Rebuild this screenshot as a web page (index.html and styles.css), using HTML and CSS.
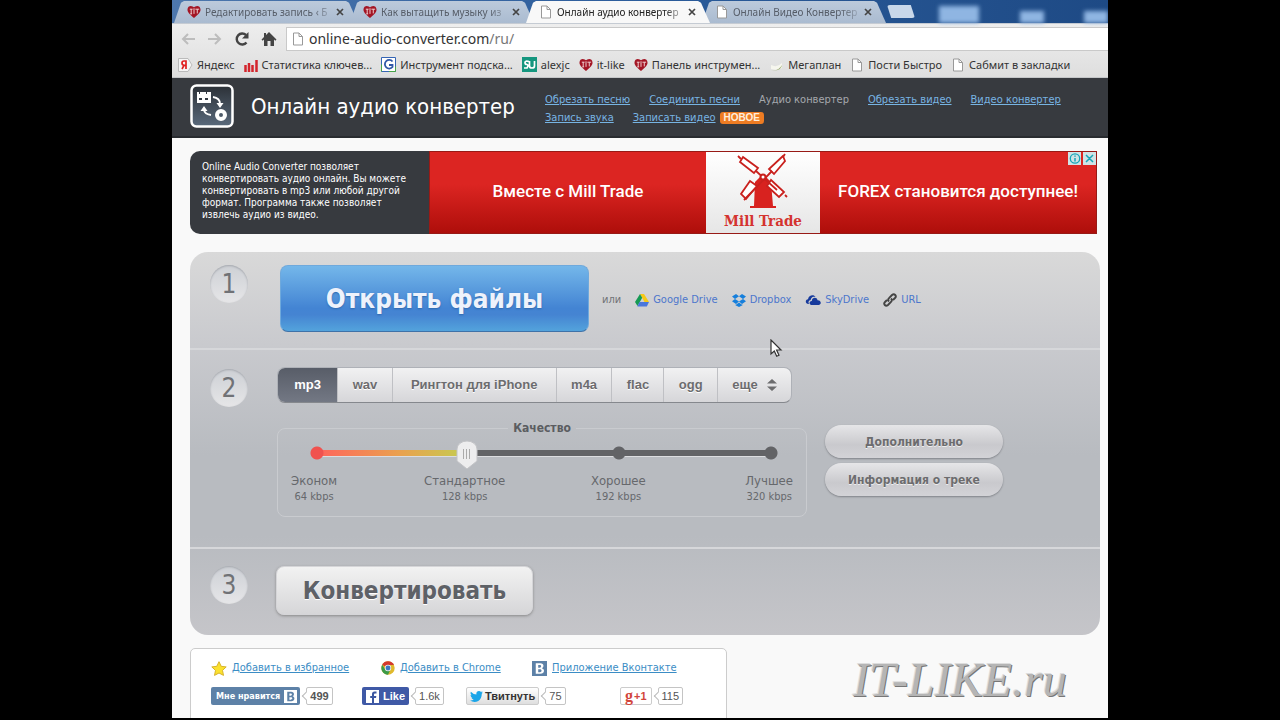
FILE: index.html
```html
<!DOCTYPE html>
<html lang="ru">
<head>
<meta charset="utf-8">
<title>Онлайн аудио конвертер</title>
<link rel="stylesheet" href="styles.css">
</head>
<body>
<svg class="defs" aria-hidden="true">
  <symbol id="page" viewBox="0 0 12 14"><path d="M1.500 1h5.500l3.500 3.500V13h-9z" fill="#fff" stroke="#999"/><path d="M7 1v3.500h3.500" fill="none" stroke="#999"/></symbol>
  <symbol id="heart" viewBox="0 0 15 14"><path d="M7.500 13.500C5 11 .5 8 .5 4.500.5 1.500 2.500.5 4 .5c1.500 0 3 .8 3.500 1.500C8 1.300 9.500.5 11 .5c1.500 0 3.500 1 3.500 4 0 3.500-4.500 6.500-7 9z" fill="#a31524"/><path d="M3 4h3M4.500 4v5M7.500 3v6M9 4h4M11 4v4.500M3.500 9h2" stroke="#f3dada" fill="none"/></symbol>
  <symbol id="vk" viewBox="0 0 14 14"><path d="M3.500 2h4.200c2 0 3 1 3 2.500 0 1-.5 1.700-1.500 2.200 1.400.4 2 1.300 2 2.500 0 1.800-1.300 2.800-3.400 2.800H3.500zm2.300 1.700v2.500h1.300c1 0 1.400-.5 1.400-1.300s-.5-1.200-1.400-1.200zm0 4.100v2.600h1.600c1 0 1.500-.5 1.500-1.300s-.5-1.300-1.500-1.300z" fill="currentColor"/></symbol>
  <symbol id="close" viewBox="0 0 8 8"><path d="M1 1l6 6M7 1L1 7" stroke="#444" stroke-width="1.700"/></symbol>
</svg>
<div class="screen">
  <header class="browser">
    <div class="tabs">
      <div class="tab"><svg class="fav"><use href="#heart"/></svg><span>Редактировать запись ‹ Б</span><button aria-label="Закрыть"><svg><use href="#close"/></svg></button></div>
      <div class="tab"><svg class="fav"><use href="#heart"/></svg><span>Как вытащить музыку из</span><button aria-label="Закрыть"><svg><use href="#close"/></svg></button></div>
      <div class="tab active"><svg class="fav"><use href="#page"/></svg><span>Онлайн аудио конвертер</span><button aria-label="Закрыть"><svg><use href="#close"/></svg></button></div>
      <div class="tab"><svg class="fav"><use href="#page"/></svg><span>Онлайн Видео Конвертер</span><button aria-label="Закрыть"><svg><use href="#close"/></svg></button></div>
      <button class="newtab" aria-label="Новая вкладка"></button>
      <div class="desktop"><i></i><i></i><i></i></div>
    </div>
    <div class="toolbar">
      <button aria-label="Назад"><svg width="16" height="16" viewBox="0 0 16 16"><path d="M15 8H3M8 3L3 8l5 5" fill="none" stroke="#bdbdbd" stroke-width="2"/></svg></button>
      <button aria-label="Вперёд"><svg width="16" height="16" viewBox="0 0 16 16"><path d="M1 8h12M8 3l5 5-5 5" fill="none" stroke="#bdbdbd" stroke-width="2"/></svg></button>
      <button aria-label="Обновить"><svg width="16" height="16" viewBox="0 0 16 16"><path d="M12.500 11.500A5.500 5.500 0 1 1 12 4" fill="none" stroke="#444" stroke-width="2.400"/><path d="M14.500 1v6.500H8z" fill="#444"/></svg></button>
      <button aria-label="Домой"><svg width="16" height="16" viewBox="0 0 16 16"><path d="M8 1l7.500 7.500-1.200 1.200L13 8.500V15H9.500v-5h-3v5H3V8.500L1.700 9.700.5 8.500 3 6V2h2v2z" fill="#444"/></svg></button>
      <div class="address"><svg class="fav"><use href="#page"/></svg><span class="url" role="textbox" aria-label="Адрес" contenteditable="true" spellcheck="false">online-audio-converter.com<em>/ru/</em></span></div>
    </div>
    <nav class="bookmarks">
      <a href="#"><svg width="15" height="14" viewBox="0 0 15 14"><path d="M.5.5H10L14 7l-4 6.500H.5z" fill="#f5f5f5" stroke="#bbb"/><path d="M8 11V3H6Q4 3 4 5t2 2.300H8M6 7.300L4 11" fill="none" stroke="#e02020" stroke-width="1.700"/></svg>Яндекс</a>
      <a href="#"><svg width="14" height="14" viewBox="0 0 14 14"><path d="M1.500 14V7M5 14V5M8.500 14V7M12.500 14V2" stroke="#d3252c" stroke-width="2.500"/></svg>Статистика ключев...</a>
      <a href="#"><svg width="15" height="15" viewBox="0 0 15 15"><path d="M.5.5h14v14H.5z" fill="#fff" stroke="#3565b5"/><path d="M.5 14.500v-7M8 14.500h6.500v-5" stroke="#48a548" fill="none"/><path d="M11.500 4.500A4.300 4.300 0 1 0 11.500 10V8H8" fill="none" stroke="#3158a8" stroke-width="1.800"/></svg>Инструмент подска...</a>
      <a href="#"><svg width="15" height="15" viewBox="0 0 15 15"><path d="M0 0h15v15H0z" fill="#15967f"/><path d="M7 4.500Q3 3.500 3 5.500T5 7.500 5 11H2M7.500 4v5q0 2 2.500 2t2.500-2V4" fill="none" stroke="#fff" stroke-width="1.700"/></svg>alexjc</a>
      <a href="#"><svg class="fav"><use href="#heart"/></svg>it-like</a>
      <a href="#"><svg class="fav"><use href="#heart"/></svg>Панель инструмен...</a>
      <a href="#"><svg width="15" height="14" viewBox="0 0 15 14"><path d="M2 7q6 3 11-2v5q-5 3-11 1z" fill="#f6f6ee"/><path d="M2 12q7 2 11-5-1 7-11 5z" fill="#9dae74"/></svg>Мегаплан</a>
      <a href="#"><svg class="fav"><use href="#page"/></svg>Пости Быстро</a>
      <a href="#"><svg class="fav"><use href="#page"/></svg>Сабмит в закладки</a>
    </nav>
  </header>

  <div class="site-head">
    <svg class="logo" viewBox="0 0 44 44"><defs><linearGradient id="lg" x2="0" y2="1"><stop stop-color="#2c3137"/><stop offset="1" stop-color="#5a6a7c"/></linearGradient></defs><rect x="1.500" y="1.500" width="41" height="41" rx="5" fill="url(#lg)" stroke="#fff" stroke-width="2.500"/><path d="M7 8h2v2h1V8h6v2h1V8h4v11H7z" fill="#fff"/><path d="M9 14h3v2H9zM15 14h3v2h-3z" fill="#343b43"/><path d="M23 13q7 1 7 7M21 31q-7-1-7-6" fill="none" stroke="#fff" stroke-width="1.800"/><path d="M26.500 19h7L30 24zM10.500 27h7L14 22z" fill="#fff"/><circle cx="31" cy="31" r="4" fill="none" stroke="#fff" stroke-width="4"/></svg>
    <h1>Онлайн аудио конвертер</h1>
    <nav class="menu">
      <a href="#">Обрезать песню</a><a href="#">Соединить песни</a><span>Аудио конвертер</span><a href="#">Обрезать видео</a><a href="#">Видео конвертер</a>
      <a href="#">Запись звука</a><a href="#">Записать видео</a><b>НОВОЕ</b>
    </nav>
  </div>

  <main>
    <section class="banner">
      <p>Online Audio Converter позволяет конвертировать аудио онлайн. Вы можете конвертировать в mp3 или любой другой формат. Программа также позволяет извлечь аудио из видео.</p>
      <a href="#" class="ad">
        <span class="slogan">Вместе с Mill Trade</span>
        <span class="mill"><svg width="62" height="60" viewBox="0 0 62 60"><path d="M31 22l-8 8-1 24h-4v2h26v-2h-3l-2-24z" fill="#d8221f"/><g fill="#fff" stroke="#c9211e" stroke-width="1.800"><path d="M11 5l15 11-4 5L8 10zM51 4L37 17l5 5 11-13zM25 34l-7-5L9 42l5 5zM39 28l-4 6 12 11 5-5z"/><path d="M6 4l3 3M24 19l21 19M53 2l-2 3M40 19L12 48M53 43l2 2" fill="none"/></g><circle cx="31" cy="25" r="3.500" fill="#c9211e"/><circle cx="31" cy="25" r="1.500" fill="#fff"/></svg><b>Mill Trade</b></span>
        <span class="slogan">FOREX становится доступнее!</span>
        <svg class="adchoice" width="28" height="13" viewBox="0 0 28 13"><path d="M0 0h13v13H0zM15 0h13v13H15z" fill="#cfe3e6"/><circle cx="7" cy="6.500" r="4.700" fill="none" stroke="#17a5b8" stroke-width="1.300"/><path d="M7 3.500v1.200M7 6v3.500M18 3l7 7M25 3l-7 7" stroke="#17a5b8" stroke-width="1.500"/></svg>
      </a>
    </section>

    <section class="panel">
      <div class="step one">
        <span class="num">1</span>
        <button class="open">Открыть файлы</button>
        <div class="sources">
          <span>или</span>
          <a href="#"><svg width="14" height="13" viewBox="0 0 14 13"><path d="M5 0h4l5 8H9.500z" fill="#f7c915"/><path d="M5 0l2.200 3.700L2.500 12 0 8z" fill="#169a54"/><path d="M4.500 8H14l-2.200 4.500H2.300z" fill="#4a77dc"/></svg>Google Drive</a>
          <a href="#"><svg width="14" height="13" viewBox="0 0 14 13"><path d="M4 0l3 2.300L3 5 0 2.600zM10 0L7 2.300 11 5l3-2.400zM0 7.200L3 5l4 2.600L4 10zM14 7.200L11 5 7 7.600 10 10zM3.500 10.500l.5.300 3-2.300 3 2.300.5-.3v.8L7 13l-3.500-1.700z" fill="#167fdc"/></svg>Dropbox</a>
          <a href="#"><svg width="16" height="12" viewBox="0 0 16 12"><path d="M3.500 10C0 10 0 5.500 3 5.300 3.500 1 9 0 10.500 3 7 2 5.800 4.500 5.700 6 3.500 6.300 3 8.500 4 10z" fill="#173a9c"/><path d="M6 11C3.500 10 4.500 6.800 6.800 7 7 3 12 2.800 12.500 6.200c3.500-.2 4.500 4 1.500 4.800z" fill="#173a9c"/></svg>SkyDrive</a>
          <a href="#"><svg width="14" height="14" viewBox="0 0 14 14"><path d="M6 8.500c-1.500-1.500-.8-2.500 0-3.300L9 2c2.500-2 5 1 3 3L10 7M8 5.500c1.500 1.500.8 2.500 0 3.300L5 12c-2.500 2-5-1-3-3L4 7" fill="none" stroke="#444" stroke-width="1.900"/></svg>URL</a>
        </div>
      </div>
      <div class="step two">
        <span class="num">2</span>
        <div class="settings">
          <div class="formats">
            <button class="on">mp3</button><button>wav</button><button class="wide">Рингтон для iPhone</button><button>m4a</button><button>flac</button><button>ogg</button><button>еще<svg width="10" height="12" viewBox="0 0 10 12"><path d="M0 4.500L5 0l5 4.500zM0 7.500L5 12l5-4.500z" fill="#6c6c6e"/></svg></button>
          </div>
          <div class="row">
            <fieldset>
              <legend><label for="quality">Качество</label></legend>
              <input id="quality" type="range" min="0" max="100" value="33">
              <div class="marks">
                <div>Эконом<small>64 kbps</small></div><div>Стандартное<small>128 kbps</small></div><div>Хорошее<small>192 kbps</small></div><div>Лучшее<small>320 kbps</small></div>
              </div>
            </fieldset>
            <div class="extra"><button>Дополнительно</button><button>Информация о треке</button></div>
          </div>
        </div>
      </div>
      <div class="step three">
        <span class="num">3</span>
        <button class="convert">Конвертировать</button>
      </div>
    </section>

    <div class="bottom">
      <section class="share">
        <div class="links">
          <a href="#"><svg width="16" height="15" viewBox="0 0 16 15"><path d="M8 .7l2.200 4.600 5 .6-3.700 3.500 1 5L8 12l-4.500 2.400 1-5L.8 5.900l5-.6z" fill="#fbe12e" stroke="#d7b32c"/></svg>Добавить в избранное</a>
          <a href="#"><svg width="14" height="14" viewBox="0 0 14 14"><circle cx="7" cy="7" r="6.700" fill="#e0b92c"/><path d="M7 7L1.200 3.700A6.700 6.700 0 0 1 13 4H7z" fill="#d3392f"/><path d="M1.200 3.700A6.700 6.700 0 0 0 7 13.700L9.500 8.500 4.500 9z" fill="#3b9a48"/><circle cx="7" cy="7" r="3.200" fill="#eee"/><circle cx="7" cy="7" r="2.400" fill="#3b77c4"/></svg>Добавить в Chrome</a>
          <a href="#"><svg class="vkicon"><use href="#vk"/></svg>Приложение Вконтакте</a>
        </div>
        <div class="likes">
          <div class="social"><button class="vk">Мне нравится<svg><use href="#vk"/></svg></button><span class="count strong">499</span></div>
          <div class="social"><button class="fb"><svg width="13" height="13" viewBox="0 0 13 13"><path d="M0 0h13v13H0z" fill="#fff"/><path d="M8 13V8h2l.3-2H8V4.500Q8 3.500 9 3.500h1.500v-2H8.500Q6 1.500 6 4v2H4.200v2H6v5z" fill="#3b56a0"/></svg>Like</button><span class="count">1.6k</span></div>
          <div class="social"><button class="tw"><svg width="13" height="11" viewBox="0 0 13 11"><path d="M0 9.500q2.200.2 3.700-1Q1.800 8.300 1.300 6.600h1.200Q.5 6 .5 4l1.200.3Q-.1 2.800.9.800q2.300 2.700 5.500 2.800Q6 .3 9 .1q1.300 0 2 .8l1.600-.6-1 1.400 1.400-.3-1.200 1.400Q11.700 8 8.300 10 4 12 0 9.500z" fill="#1ba5e8"/></svg>Твитнуть</button><span class="count">75</span></div>
          <div class="social"><button class="plus"><b>g</b>+1</button><span class="count">115</span></div>
        </div>
      </section>
      <div class="watermark">IT-LIKE.ru</div>
    </div>
  </main>
  <svg class="cursor" width="14" height="20" viewBox="0 0 14 20"><path d="M2 1v14l3.300-3 2.400 5.300 2.300-1L7.600 11H12z" fill="#fff" stroke="#333" stroke-width="1.200"/></svg>
</div>
</body>
</html>
```

FILE: styles.css
```css
* { box-sizing: border-box; }
body { margin: 0; background: #000; font: 11px/16px "DejaVu Sans Condensed", "DejaVu Sans", sans-serif; }
button { font: inherit; border: 0; padding: 0; background: none; cursor: pointer; }
h1, p { margin: 0; }
svg { flex: none; }
.defs { position: absolute; width: 0; height: 0; }
.screen { position: relative; max-width: 936px; height: calc(100vh - 2px); margin: 0 auto; overflow: hidden; background: #f9f9f9; }
.fav { width: 14px; height: 14px; }

.browser { font-family: "Noto Sans", sans-serif; font-size: 11px; background: linear-gradient(#f5f5f5, #dedede); border-bottom: 1px solid #c4c6c8; }
.tabs { display: flex; height: 24px; padding: 1px 0 0 2px; background: linear-gradient(90deg, #4d77ad, #2b5c9b 50%, #1e4a85); border-bottom: 1px solid #c5cbd3; }
.tab { display: flex; align-items: center; width: 184px; margin-right: -8px; padding: 0 13px; gap: 4px; font-size: 10px; color: #565d68; background: linear-gradient(#bccadb, #aabbd0); clip-path: polygon(0 100%, 7px 8%, 10px 0, calc(100% - 12px) 0, calc(100% - 9px) 8%, 100% 100%); }
.tab span { flex: 1; white-space: nowrap; mask-image: linear-gradient(90deg, #000 86%, #0004); }
.tab button { display: flex; justify-content: center; width: 11px; }
.tab button svg { width: 8px; height: 8px; }
.tab.active { z-index: 1; background: #f8f8f8; color: #222; }
.newtab { width: 28px; height: 13px; margin: 4px 0 0 9px; background: #c9d8ea; border-radius: 3px; clip-path: polygon(0 0, 85% 0, 100% 100%, 15% 100%); }
.desktop { display: flex; flex: 1; align-items: flex-end; justify-content: space-between; padding: 0 0 0 24px; filter: blur(2px); }
.desktop i { width: 24px; height: 12px; background: #8fb5e2; }
.desktop i:first-child { width: 40px; height: 17px; }
.toolbar { display: flex; align-items: center; height: 28px; padding: 2px 0 1px 8px; }
.toolbar button { display: flex; margin-right: 11px; }
.toolbar button:nth-of-type(4) { margin-right: 9px; }
.address { display: flex; flex: 1; align-items: center; gap: 4px; height: 24px; padding-left: 4px; background: #fff; border: 1px solid #c9c9c9; border-right: 0; }
.url { flex: 1; font-size: 14px; color: #333; outline: 0; }
.url em { font-style: normal; color: #777; }
.bookmarks { display: flex; align-items: center; height: 25px; padding: 0 6px; gap: 9px; }
.bookmarks a { display: flex; align-items: center; gap: 4px; color: #333; text-decoration: none; white-space: nowrap; }

.site-head { display: flex; align-items: center; height: 60px; padding: 0 18px; background: #373a3f; border-bottom: 2px solid #292c30; }
.logo { width: 44px; height: 44px; margin-top: -2px; }
h1 { margin-left: 17px; width: 294px; font-size: 22px; line-height: 30px; font-weight: 400; color: #fff; white-space: nowrap; }
.menu { display: flex; flex: 1; flex-wrap: wrap; column-gap: 19px; margin-top: 4px; line-height: 18px; white-space: nowrap; align-items: center; }
.menu a { color: #77b4e3; }
.menu span { color: #a5a8ad; }
.menu b { margin-left: -15px; padding: 0 4px; border-radius: 3px; background: #ee7c23; color: #ffeedd; font: bold 10px/12px "Liberation Sans", sans-serif; }

main { padding: 13px 8px 0 18px; }
.banner { display: flex; height: 83px; margin-right: 3px; border-radius: 10px 0 0 10px; overflow: hidden; background: #373a3f; }
.banner p { width: 239px; padding: 10px 12px; font-size: 10px; line-height: 12px; color: #fff; }
.ad { position: relative; display: flex; flex: 1; background: linear-gradient(#dc2522 40%, #ae0e0a); border: 1px solid #981a16; font: 500 17px/22px Roboto, sans-serif; color: #fff; text-decoration: none; text-align: center; white-space: nowrap; }
.slogan { flex: 1; padding: 28px 0; }
.mill { width: 114px; background: linear-gradient(#fff, #e6e6e6); display: flex; flex-direction: column; align-items: center; }
.mill b { font: bold 15px/18px "DejaVu Serif Condensed", "DejaVu Serif", serif; color: #d4332f; }
.adchoice { position: absolute; top: 0; right: 0; }

.panel { margin-top: 18px; border-radius: 18px; background: linear-gradient(#d9d9d9, #c9cace 24%, #b8bbc0 53%, #b8bbc0 74%, #c5c5c9); }
.step { display: flex; align-items: flex-start; padding-left: 20px; }
.step + .step { border-top: 2px solid #d6d7da; }
.num { flex: none; width: 38px; height: 38px; border-radius: 50%; background: linear-gradient(#cdd0d5, #e6e6e8); box-shadow: inset 0 1px 2px #a4a7ad; font-size: 26px; line-height: 38px; text-align: center; color: #707276; }
.one { height: 96px; padding-top: 13px; }
.open { width: 309px; height: 67px; margin-left: 32px; border: 1px solid #6fa9dc; border-bottom-color: #3f72a8; border-radius: 8px; background: linear-gradient(#74b7ea, #4384d3 65%, #4584d2 75%, #53a3dc); color: #eef2fb; font-size: 26px; font-weight: bold; text-shadow: 0 1px 2px #2f68ad; }
.sources { display: flex; align-items: center; gap: 14px; margin: 27px 0 0 13px; color: #707276; }
.sources a { display: flex; align-items: center; gap: 4px; color: #4c76cc; text-decoration: none; }
.two { height: 199px; padding-top: 17px; }
.two .num { margin-top: 2px; }
.settings { flex: 1; margin-left: 29px; }
.formats { display: flex; width: 515px; height: 36px; border: 1px solid #aeb1b7; border-bottom-color: #85888d; border-radius: 8px; overflow: hidden; background: linear-gradient(#f1f1f2, #d6d6d9); font: bold 13px/16px "Liberation Sans", sans-serif; }
.formats button { flex: auto; color: #6c6c6e; border-left: 1px solid #bfc0c4; text-shadow: 0 1px #fff; }
.formats .on { border: 0; padding: 0 2px; background: linear-gradient(#585d68, #737884); color: #fff; text-shadow: none; }
.formats .wide { padding: 0 4px; }
.formats svg { margin-left: 9px; vertical-align: -2px; }
.row { display: flex; gap: 18px; margin-top: 17px; }
fieldset { width: 530px; height: 97px; margin: 0; padding: 0 13px; border: 1px solid #c9cbcf; border-radius: 8px; min-width: 0; }
legend { margin: 0 auto; padding: 0 5px; font-size: 12px; font-weight: bold; color: #5b5d61; }
#quality { appearance: none; display: block; width: 476px; height: 32px; margin: 2px 0 0 15px; background:
  radial-gradient(circle at 11px 15px, #f0524f 6px, transparent 7px),
  radial-gradient(circle at 313px 15px, #626366 6px, transparent 7px),
  radial-gradient(circle at 465px 15px, #626366 6px, transparent 7px),
  linear-gradient(90deg, #ff645c, #eaa04f 18%, #c9c750 31%, #626366 32%) 11px 12px / 454px 6px no-repeat,
  linear-gradient(#dcdde0, #dcdde0) 11px 18px / 454px 1px no-repeat; }
#quality::-webkit-slider-thumb { appearance: none; width: 22px; height: 31px; background: url("data:image/svg+xml,%3Csvg xmlns='http://www.w3.org/2000/svg' viewBox='0 0 22 31'%3E%3Cpath d='M1 10a10 8 0 0 1 20 0v12l-10 8-10-8z' fill='%23ededee' stroke='%23c2c3c6'/%3E%3Cpath d='M7.500 10v10M10.500 10v10M13.500 10v10' stroke='%23aaa'/%3E%3C/svg%3E"); }
.marks { display: grid; grid-template-columns: 97fr 154fr 154fr 98fr; margin-top: 3px; text-align: center; font-size: 13px; color: #66686c; }
.marks div:first-child { justify-self: start; }
.marks div:last-child { justify-self: end; }
.marks small { display: block; font-size: 11px; }
.extra { display: flex; flex-direction: column; gap: 5px; margin-top: 5px; }
.extra button { width: 178px; height: 33px; border-radius: 17px; background: linear-gradient(#e6e6e8, #c9c9cd 60%, #d3d3d7); box-shadow: 0 1px 2px #808388; color: #6c6c6e; font-weight: bold; font-size: 12px; text-shadow: 0 1px #eee; }
.three { height: 88px; padding-top: 17px; }
.convert { width: 257px; height: 49px; margin: 0 0 0 28px; border: 1px solid #d5d5d8; border-radius: 8px; background: linear-gradient(#f2f2f2, #d6d6d8); box-shadow: 0 1px 3px #888; color: #5e6167; font-size: 24px; font-weight: bold; text-shadow: 0 1px #fff; }

.bottom { display: flex; align-items: flex-start; margin-top: 13px; }
.share { width: 537px; height: 90px; padding: 11px 20px; background: #fff; border: 1px solid #ccc; border-radius: 5px; }
.links { display: grid; grid-template-columns: 170px 151px auto; }
.links a { display: flex; align-items: center; gap: 5px; color: #3b8dc5; white-space: nowrap; }
.likes { display: grid; grid-template-columns: 151px 104px 154px auto; margin-top: 11px; }
.vkicon { width: 15px; height: 15px; background: #5d81a7; color: #fff; }
.social { display: flex; align-items: center; font: 11px/16px "Liberation Sans", sans-serif; color: #555; }
.social button { display: flex; align-items: center; gap: 4px; height: 18px; padding: 0 4px; border-radius: 2px; }
.social .vk { background: #5d81a7; color: #fff; padding: 0 3px 0 5px; font: bold 9px/16px "DejaVu Sans Condensed", "DejaVu Sans", sans-serif; }
.vk svg { width: 13px; height: 13px; background: #fff; color: #5d81a7; }
.social .fb { background: #3f59a6; color: #fff; font-weight: bold; }
.social .tw { border: 1px solid #ccc; background: linear-gradient(#fff, #dedede); color: #333; font-weight: bold; padding: 0 3px; gap: 2px; }
.social .plus { border: 1px solid #ccc; color: #d2453b; font-weight: bold; gap: 1px; }
.plus b { font: bold 16px/14px "Liberation Serif", serif; }
.count { position: relative; margin-left: 6px; padding: 0 3px; border: 1px solid #c4c4c4; border-radius: 2px; background: #fff; }
.count::before { content: ""; position: absolute; left: -4px; top: 5px; width: 5px; height: 5px; background: #fff; border: solid #bbb; border-width: 0 0 1px 1px; transform: rotate(45deg); }
.strong { font-weight: bold; }
.watermark { margin: 8px 0 0 126px; font: italic 48px/48px "Liberation Serif", serif; color: #b5b5b5; text-shadow: 1px 1px #777, -1px -1px #ddd; white-space: nowrap; }
.cursor { position: absolute; left: 597px; top: 339px; }
```
